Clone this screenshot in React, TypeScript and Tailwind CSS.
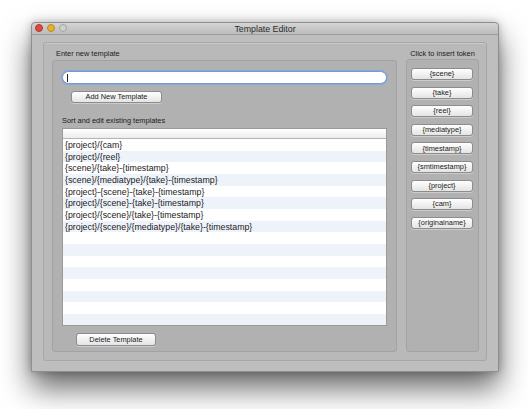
import React from "react";

const templates = [
  "{project}/{cam}",
  "{project}/{reel}",
  "{scene}/{take}-{timestamp}",
  "{scene}/{mediatype}/{take}-{timestamp}",
  "{project}-{scene}-{take}-{timestamp}",
  "{project}/{scene}-{take}-{timestamp}",
  "{project}/{scene}/{take}-{timestamp}",
  "{project}/{scene}/{mediatype}/{take}-{timestamp}",
];

const tokens = [
  "{scene}",
  "{take}",
  "{reel}",
  "{mediatype}",
  "{timestamp}",
  "{smtimestamp}",
  "{project}",
  "{cam}",
  "{originalname}",
];

function MacButton({ label, className }: { label: string; className: string }) {
  return (
    <div
      className={
        "flex items-center justify-center rounded-[3px] border border-[#8c8c8c] bg-gradient-to-b from-[#ffffff] to-[#e4e4e4] text-[7.4px] leading-none text-[#1a1a1a] shadow-[0_1px_0_rgba(255,255,255,0.35)] " +
        className
      }
    >
      {label}
    </div>
  );
}

export default function App() {
  const rows = Array.from({ length: 16 }, (_, i) => templates[i] ?? "");
  return (
    <div
      className="w-[528px] h-[409px] bg-white overflow-hidden pt-[22px] pl-[31px]"
      style={{ fontFamily: '"Liberation Sans", Arial, sans-serif' }}
    >
      <div className="w-[468px] h-[350px] flex flex-col rounded-t-[4px] border border-[#8e8e8e] bg-[#bebebe] shadow-[0_16px_30px_rgba(0,0,0,0.6),0_0_8px_rgba(0,0,0,0.25)]">
        {/* title bar */}
        <div className="relative h-[12px] flex items-center justify-center rounded-t-[4px] bg-gradient-to-b from-[#d4d4d4] to-[#bcbcbc] border-b border-[#9c9c9c]">
          <div className="absolute left-[3px] top-[1px] flex gap-[4px]">
            <div className="w-[8px] h-[8px] rounded-full bg-[#e2463f] border border-[#b03a33]" />
            <div className="w-[8px] h-[8px] rounded-full bg-[#e8b02c] border border-[#b9892b]" />
            <div className="w-[8px] h-[8px] rounded-full bg-[#cfcfcf] border border-[#a4a4a4]" />
          </div>
          <span className="text-[8.8px] leading-none text-[#2a2a2a] mt-[1px]">Template Editor</span>
        </div>

        {/* body */}
        <div className="flex-1 pt-[7px] px-[11px] pb-[10px]">
          <div className="h-full flex gap-[9px] pl-[8px] pr-[7px] pb-[8px] rounded-[3px] border border-[#a7a7a7] bg-[#b9b9b9] shadow-[inset_0_1px_0_rgba(255,255,255,0.25)]">
            {/* left column */}
            <div className="w-[345px] flex flex-col">
              <div className="h-[17px] pt-[7px] pl-[4px] text-[7.4px] leading-[8px] text-[#1a1a1a]">
                Enter new template
              </div>
              <div className="flex-1 flex flex-col pt-[10px] px-[9px] rounded-[3px] border border-[#a3a3a3] bg-[#b1b1b1]">
                <div className="h-[13px] flex items-center rounded-full bg-white border border-[#6f9bd6] shadow-[0_0_0_1px_rgba(120,160,220,0.6)] pl-[4px]">
                  <div className="w-[1px] h-[8px] bg-[#222]" />
                </div>
                <MacButton label="Add New Template" className="mt-[7px] ml-[9px] w-[91px] h-[12px]" />
                <div className="h-[25px] pt-[14px] text-[7.4px] leading-[8px] text-[#1a1a1a]">
                  Sort and edit existing templates
                </div>
                <div className="h-[198px] flex flex-col border border-[#9a9a9a] bg-white overflow-hidden">
                  <div className="h-[10px] shrink-0 bg-gradient-to-b from-[#ffffff] to-[#ececec] border-b border-[#b4b4b4]" />
                  {rows.map((t, i) => (
                    <div
                      key={i}
                      className={
                        "h-[11.67px] shrink-0 flex items-center pl-[2px] pt-[1px] text-[8.8px] leading-none text-[#1a1a1a] " +
                        (i % 2 === 0 ? "bg-white" : "bg-[#eef3fa]")
                      }
                    >
                      {t}
                    </div>
                  ))}
                </div>
                <MacButton label="Delete Template" className="mt-[7px] ml-[14px] w-[80px] h-[13px]" />
              </div>
            </div>

            {/* right column */}
            <div className="flex-1 flex flex-col">
              <div className="h-[16px] pt-[7px] text-center text-[7.4px] leading-[8px] text-[#1a1a1a] whitespace-nowrap">
                Click to insert token
              </div>
              <div className="flex-1 flex flex-col gap-[6.6px] pt-[8px] pl-[4px] pr-[5px] rounded-[3px] border border-[#a3a3a3] bg-[#b1b1b1]">
                {tokens.map((t) => (
                  <MacButton key={t} label={t} className="w-full h-[12px]" />
                ))}
              </div>
            </div>
          </div>
        </div>
      </div>
    </div>
  );
}
